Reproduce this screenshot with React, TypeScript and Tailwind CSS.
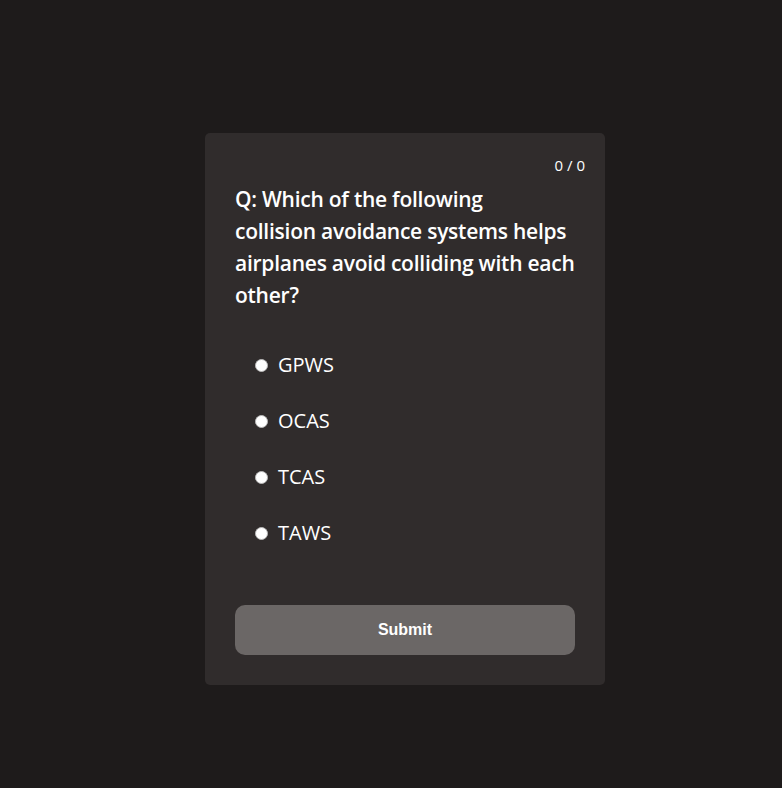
import React from "react";

export default function App() {
  const options = ["GPWS", "OCAS", "TCAS", "TAWS"];
  return (
    <div
      className="min-h-screen w-full bg-[#1e1b1b] flex items-center justify-center pl-[28px] pt-[30px]"
      style={{ fontFamily: "'Open Sans', 'Noto Sans', sans-serif" }}
    >
      <div className="w-[400px] bg-[#302c2c] rounded-[5px] px-[30px] pt-[20px] pb-[30px] flex flex-col">
        <div className="flex justify-end -mr-[10px] text-[15px] leading-[24px] text-white">0 / 0</div>
        <div className="mt-[6px] text-[21px] leading-[32px] font-semibold text-white tracking-[-0.25px] whitespace-nowrap">
          Q: Which of the following
          <br />
          collision avoidance systems helps
          <br />
          airplanes avoid colliding with each
          <br />
          other?
        </div>
        <div className="mt-[26px] flex flex-col">
          {options.map((o) => (
            <label key={o} className="h-[56px] flex items-center pl-[20px] text-white text-[20px]">
              <span className="w-[13px] h-[13px] rounded-full bg-white border border-[#bbb] mr-[10px]" />
              {o}
            </label>
          ))}
        </div>
        <button
          className="mt-[44px] h-[50px] w-full rounded-[10px] bg-[#6b6766] text-white font-bold text-[16px]"
          style={{ fontFamily: "'Liberation Sans', Arial, sans-serif" }}
        >
          Submit
        </button>
      </div>
    </div>
  );
}
